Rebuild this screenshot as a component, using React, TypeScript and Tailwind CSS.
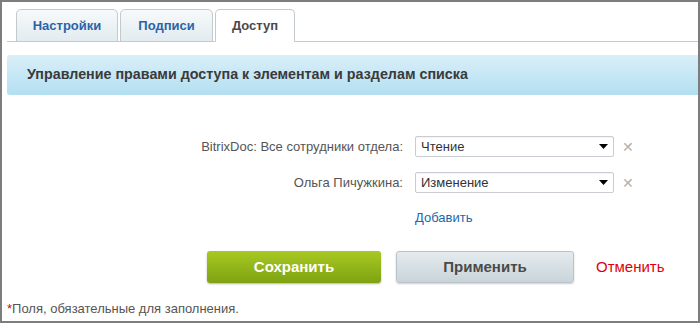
import { useState } from 'react';

const tabs = ["Настройки", "Подписи", "Доступ"];

const rows = [
    { label: "BitrixDoc: Все сотрудники отдела:", value: "Чтение" },
    { label: "Ольга Пичужкина:", value: "Изменение" },
];

function SelectBox({ value }: { value: string }) {
    return (
        <div className="flex items-center h-[21px] w-[199px] border border-[#c9cdd1] rounded-[2px] bg-white pl-[5px] pr-[5px] shadow-[inset_0_1px_1px_rgba(0,0,0,0.05)]">
            <span className="text-[13px] text-[#333] flex-1 leading-none">{value}</span>
            <svg width="9" height="5" viewBox="0 0 9 5"><path d="M0 0h9L4.5 5z" fill="#000" /></svg>
        </div>
    );
}

export default function App() {
    const [active] = useState(2);

    return (
        <div className="w-[700px] h-[323px] border-2 border-[#7d7d7d] bg-white font-['Liberation_Sans',Arial,sans-serif] text-[#555] flex flex-col">
            <div className="pt-[7px] pl-[5px]">
                <div className="flex border-b border-[#c3c9cd] pl-[9px] gap-[2px] h-[33px] items-end">
                    {tabs.map((t, i) => (
                        <div
                            key={t}
                            className={`h-[33px] -mb-px flex items-center justify-center rounded-t-[5px] border border-[#c3c9cd] text-[13px] font-bold ${i === active ? 'bg-white border-b-white text-[#4a4a4a] w-[80px]' : 'bg-gradient-to-b from-[#f7fafb] to-[#e2ebf0] text-[#2b63a8]'} ${i === 0 ? 'w-[102px]' : ''} ${i === 1 ? 'w-[93px]' : ''}`}>
                            {t}
                        </div>
                    ))}
                </div>

                <div className="mt-[13px] h-[40px] rounded-l-[3px] bg-gradient-to-b from-[#d9eff8] to-[#b3dff1] flex items-center pl-[20px] text-[14.3px] font-bold text-[#3a3a3a]">
                    Управление правами доступа к элементам и разделам списка
                </div>
            </div>

            <div className="mt-[41px] flex flex-col gap-[15px]">
                {rows.map(r => (
                    <div key={r.label} className="flex items-center">
                        <div className="w-[401px] text-right text-[13px] text-[#555]">{r.label}</div>
                        <div className="ml-[12px]"><SelectBox value={r.value} /></div>
                        <span className="ml-[8px] text-[#b0b0b0] text-[14px] leading-none">✕</span>
                    </div>
                ))}
                <div className="pl-[413px] -mt-[3px]">
                    <span className="text-[13px] text-[#2067b0]">Добавить</span>
                </div>
            </div>

            <div className="mt-[22px] flex items-center pl-[205px]">
                <button className="w-[174px] h-[32px] rounded-[3px] bg-gradient-to-b from-[#a8c922] to-[#7ea212] text-white text-[15px] font-bold shadow-[0_1px_2px_rgba(0,0,0,0.3)]">Сохранить</button>
                <button className="ml-[15px] w-[178px] h-[32px] rounded-[3px] border border-[#b9c4ca] bg-gradient-to-b from-[#e4ebee] to-[#c9d4da] text-[#4a4a4a] text-[15px] font-bold shadow-[0_1px_2px_rgba(0,0,0,0.2)]">Применить</button>
                <span className="ml-[22px] text-[15px] text-[#e0000b]">Отменить</span>
            </div>

            <div className="mt-auto mb-[3px] pl-[5px] text-[13px] text-[#555]">
                <span className="text-[#e0000b]">*</span>Поля, обязательные для заполнения.
            </div>
        </div>
    );
}
